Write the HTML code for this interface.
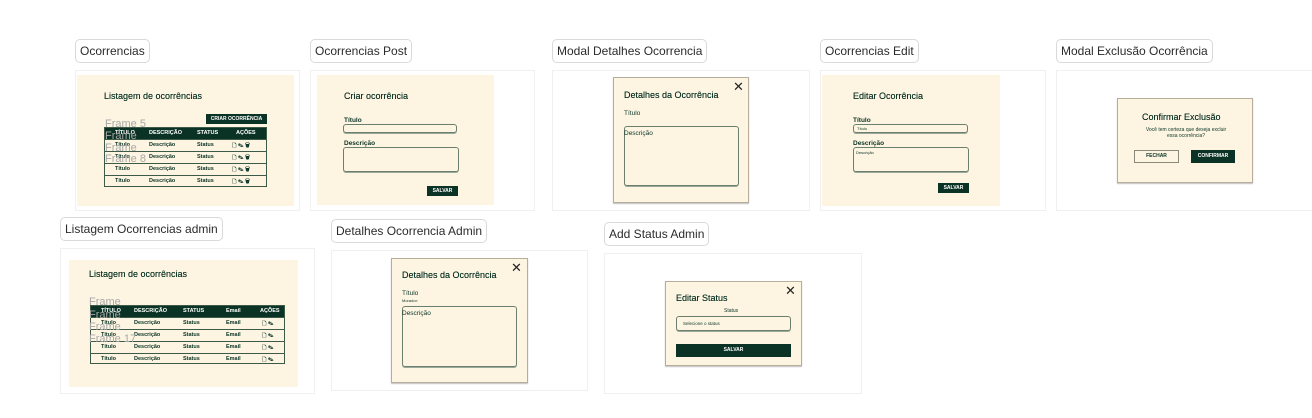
<!DOCTYPE html>
<html><head><meta charset="utf-8">
<style>
*{box-sizing:border-box;margin:0;padding:0}
body{width:1312px;height:418px;background:#fff;position:relative;overflow:hidden;font-family:"Liberation Sans",sans-serif;color:#0b3325}
div{position:absolute}
.lbl{border:1px solid #d9d9d9;border-radius:5px;background:#fff;font-size:12px;color:#2b2b2b;padding:0 4px;line-height:22px;height:24px;white-space:nowrap}
.frm{border:1px solid #f0f0f0;background:#fff}
.cr{background:#fdf5e2}
.h{font-size:9px;white-space:nowrap;text-shadow:0 0 0.3px #0b3325}
.s{font-size:6.5px;font-weight:bold;white-space:nowrap}
.t{font-size:5.5px;white-space:nowrap}
.inp{border:1px solid #6b7f6e;border-radius:3px;box-shadow:0 1px 0 #9aa99a}
.btn{background:#0b3325;color:#fff;font-size:5px;font-weight:bold;text-align:center}
.modal{background:#fdf5e2;border:1px solid #b8ad9a;box-shadow:0 1px 1px rgba(0,0,0,.25)}
.tbl{border:1px solid #3d5a48;background:#fdf5e2}
.th{background:#0b3325;height:11px;left:0;right:0;top:0}
.th span,.row span{position:absolute;font-size:5.5px;font-weight:bold;top:2px;white-space:nowrap}
.th span{color:#fff}
.row{left:0;right:0;height:12px;border-top:1px solid #3d5a48}
.ghost{font-size:11px;color:#a8a8a8;white-space:nowrap}
.x{font-size:13px;color:#222;line-height:1}
</style></head><body>

<div class="lbl" style="left:75px;top:39px">Ocorrencias</div>
<div class="lbl" style="left:310px;top:39px">Ocorrencias Post</div>
<div class="lbl" style="left:552px;top:39px">Modal Detalhes Ocorrencia</div>
<div class="lbl" style="left:820px;top:39px">Ocorrencias Edit</div>
<div class="lbl" style="left:1056px;top:39px">Modal Exclusão Ocorrência</div>

<div class="frm" style="left:75px;top:70px;width:225px;height:141px"></div>
<div class="cr" style="left:77px;top:75px;width:217px;height:131px"></div>
<div class="h" style="left:104px;top:91px">Listagem de ocorrências</div>
<div class="btn" style="left:206px;top:114px;width:61px;height:10px;line-height:10px">CRIAR OCORRÊNCIA</div>
<div class="tbl" style="left:104px;top:127px;width:163px;height:60px">
 <div class="th"><span style="left:10px">TÍTULO</span><span style="left:44px">DESCRIÇÃO</span><span style="left:92px">STATUS</span><span style="left:131px">AÇÕES</span></div>
 <div class="row" style="top:11px"><span style="left:10px">Título</span><span style="left:44px">Descrição</span><span style="left:92px">Status</span><span style="left:127px">🗋 ✎ 🗑</span></div>
 <div class="row" style="top:23px"><span style="left:10px">Título</span><span style="left:44px">Descrição</span><span style="left:92px">Status</span><span style="left:127px">🗋 ✎ 🗑</span></div>
 <div class="row" style="top:35px"><span style="left:10px">Título</span><span style="left:44px">Descrição</span><span style="left:92px">Status</span><span style="left:127px">🗋 ✎ 🗑</span></div>
 <div class="row" style="top:47px"><span style="left:10px">Título</span><span style="left:44px">Descrição</span><span style="left:92px">Status</span><span style="left:127px">🗋 ✎ 🗑</span></div>
</div>
<div class="ghost" style="left:105px;top:118px">Frame 5</div>
<div class="ghost" style="left:105px;top:130px">Frame</div>
<div class="ghost" style="left:105px;top:142px">Frame</div>
<div class="ghost" style="left:105px;top:153px">Frame 8</div>

<div class="frm" style="left:310px;top:70px;width:225px;height:141px"></div>
<div class="cr" style="left:317px;top:75px;width:177px;height:130px"></div>
<div class="h" style="left:344px;top:91px">Criar ocorrência</div>
<div class="s" style="left:344px;top:117px">Título</div>
<div class="inp" style="left:343px;top:124px;width:114px;height:9px"></div>
<div class="s" style="left:344px;top:140px">Descrição</div>
<div class="inp" style="left:343px;top:147px;width:116px;height:25px"></div>
<div class="btn" style="left:427px;top:186px;width:31px;height:10px;line-height:10px">SALVAR</div>

<div class="frm" style="left:552px;top:70px;width:258px;height:141px"></div>
<div class="modal" style="left:613px;top:77px;width:136px;height:126px"></div>
<div class="x" style="left:733px;top:80px">✕</div>
<div class="h" style="left:624px;top:90px">Detalhes da Ocorrência</div>
<div class="t" style="left:624px;top:110px;font-size:6.5px">Título</div>
<div class="inp" style="left:624px;top:126px;width:115px;height:60px"></div>
<div class="t" style="left:624px;top:130px;font-size:6.5px">Descrição</div>

<div class="frm" style="left:820px;top:70px;width:226px;height:141px"></div>
<div class="cr" style="left:822px;top:75px;width:178px;height:131px"></div>
<div class="h" style="left:853px;top:91px">Editar Ocorrência</div>
<div class="s" style="left:853px;top:117px">Título</div>
<div class="inp" style="left:853px;top:124px;width:115px;height:9px"></div>
<div class="t" style="left:857px;top:126px;font-size:4px">Título</div>
<div class="s" style="left:853px;top:140px">Descrição</div>
<div class="inp" style="left:853px;top:147px;width:116px;height:25px"></div>
<div class="t" style="left:856px;top:150px;font-size:4px">Descrição</div>
<div class="btn" style="left:938px;top:183px;width:31px;height:10px;line-height:10px">SALVAR</div>

<div class="frm" style="left:1056px;top:70px;width:260px;height:141px"></div>
<div class="modal" style="left:1117px;top:98px;width:136px;height:85px"></div>
<div class="h" style="left:1142px;top:112px">Confirmar Exclusão</div>
<div class="t" style="left:1140px;top:127px;width:92px;text-align:center;font-size:5px;line-height:6px;white-space:normal">Você tem certeza que deseja excluir essa ocorrência?</div>
<div style="left:1134px;top:150px;width:45px;height:13px;border:1px solid #8a8a7a;font-size:5px;font-weight:bold;text-align:center;line-height:11px">FECHAR</div>
<div class="btn" style="left:1191px;top:150px;width:44px;height:13px;line-height:13px">CONFIRMAR</div>

<div class="lbl" style="left:60px;top:217px">Listagem Ocorrencias admin</div>
<div class="lbl" style="left:331px;top:219px">Detalhes Ocorrencia Admin</div>
<div class="lbl" style="left:604px;top:222px">Add Status Admin</div>

<div class="frm" style="left:60px;top:248px;width:255px;height:146px"></div>
<div class="cr" style="left:69px;top:260px;width:229px;height:127px"></div>
<div class="h" style="left:89px;top:269px">Listagem de ocorrências</div>
<div class="tbl" style="left:90px;top:305px;width:195px;height:59px">
 <div class="th"><span style="left:10px">TÍTULO</span><span style="left:43px">DESCRIÇÃO</span><span style="left:92px">STATUS</span><span style="left:135px">Email</span><span style="left:169px">AÇÕES</span></div>
 <div class="row" style="top:11px"><span style="left:10px">Título</span><span style="left:43px">Descrição</span><span style="left:92px">Status</span><span style="left:135px">Email</span><span style="left:171px">🗋 ✎</span></div>
 <div class="row" style="top:23px"><span style="left:10px">Título</span><span style="left:43px">Descrição</span><span style="left:92px">Status</span><span style="left:135px">Email</span><span style="left:171px">🗋 ✎</span></div>
 <div class="row" style="top:35px"><span style="left:10px">Título</span><span style="left:43px">Descrição</span><span style="left:92px">Status</span><span style="left:135px">Email</span><span style="left:171px">🗋 ✎</span></div>
 <div class="row" style="top:47px"><span style="left:10px">Título</span><span style="left:43px">Descrição</span><span style="left:92px">Status</span><span style="left:135px">Email</span><span style="left:171px">🗋 ✎</span></div>
</div>
<div class="ghost" style="left:89px;top:296px">Frame</div>
<div class="ghost" style="left:89px;top:309px">Frame</div>
<div class="ghost" style="left:89px;top:321px">Frame</div>
<div class="ghost" style="left:89px;top:333px">Frame 17</div>

<div class="frm" style="left:331px;top:250px;width:257px;height:141px"></div>
<div class="modal" style="left:391px;top:258px;width:137px;height:125px"></div>
<div class="x" style="left:511px;top:261px">✕</div>
<div class="h" style="left:402px;top:270px">Detalhes da Ocorrência</div>
<div class="t" style="left:402px;top:290px;font-size:6.5px">Título</div>
<div class="t" style="left:402px;top:298px;font-size:4px">Morador:</div>
<div class="inp" style="left:402px;top:306px;width:115px;height:61px"></div>
<div class="t" style="left:402px;top:310px;font-size:6.5px">Descrição</div>

<div class="frm" style="left:604px;top:253px;width:258px;height:141px"></div>
<div class="modal" style="left:665px;top:281px;width:137px;height:85px"></div>
<div class="x" style="left:785px;top:284px">✕</div>
<div class="h" style="left:676px;top:293px">Editar Status</div>
<div class="t" style="left:724px;top:308px;font-size:5px">Status</div>
<div class="inp" style="left:676px;top:316px;width:115px;height:15px"></div>
<div class="t" style="left:683px;top:321px;font-size:4.5px">Selecione o status</div>
<div class="btn" style="left:676px;top:344px;width:115px;height:13px;line-height:13px">SALVAR</div>

</body></html>
